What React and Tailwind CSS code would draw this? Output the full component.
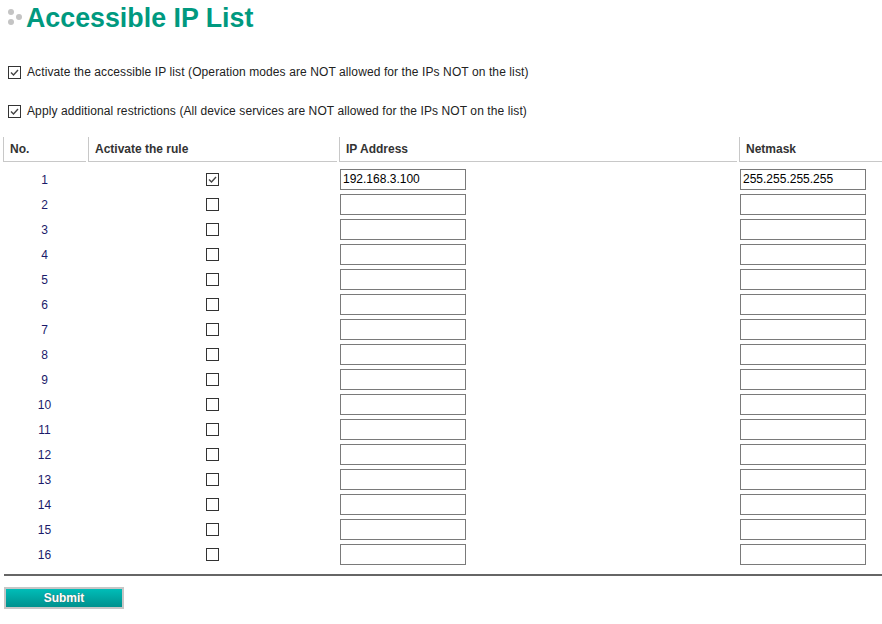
import React from "react";

function Box({ checked }) {
  return (
    <span className="inline-flex w-[13px] h-[13px] border border-[#333] bg-white items-center justify-center shrink-0">
      {checked && (
        <svg width="11" height="11" viewBox="0 0 11 11">
          <path d="M2 5.5 L4.5 8 L9 3" fill="none" stroke="#444" strokeWidth="1.4" />
        </svg>
      )}
    </span>
  );
}

function Input({ value }) {
  return (
    <div className="w-[126px] h-[21px] border border-[#7a7a7a] bg-white text-[12px] text-black leading-[19px] pl-[2px]">
      {value || ""}
    </div>
  );
}

export default function App() {
  const rows = Array.from({ length: 16 }, (_, i) => i + 1);
  return (
    <div className="w-[882px] h-[624px] bg-white font-['Liberation_Sans',Arial,sans-serif] text-[12px] text-[#222] overflow-hidden">
      <div className="flex items-center h-[36px] pl-[8px]">
        <div className="relative w-[17px] h-[20px]">
          <span className="absolute left-[0px] top-[1px] w-[6px] h-[6px] rounded-full bg-[#c4c4c4]"></span>
          <span className="absolute left-[0px] top-[11px] w-[6px] h-[6px] rounded-full bg-[#c4c4c4]"></span>
          <span className="absolute left-[8px] top-[6px] w-[6px] h-[6px] rounded-full bg-[#c4c4c4]"></span>
        </div>
        <h1 className="text-[26.8px] font-bold text-[#00997f] leading-none ml-[1px]">Accessible IP List</h1>
      </div>

      <div className="flex items-center gap-[6px] pl-[8px] mt-[29px] h-[14px] tracking-[0.1px]">
        <Box checked />
        <span>Activate the accessible IP list (Operation modes are NOT allowed for the IPs NOT on the list)</span>
      </div>
      <div className="flex items-center gap-[6px] pl-[8px] mt-[25px] h-[14px] tracking-[0.1px]">
        <Box checked />
        <span>Apply additional restrictions (All device services are NOT allowed for the IPs NOT on the list)</span>
      </div>

      <div className="grid grid-cols-[83px_249px_398px_1fr] gap-x-[2px] ml-[3px] mt-[19px]">
        <div className="h-[25px] border-l border-b border-[#c8c8c8] pl-[6px] flex items-center font-bold text-[#333]">No.</div>
        <div className="h-[25px] border-l border-b border-[#c8c8c8] pl-[6px] flex items-center font-bold text-[#333]">Activate the rule</div>
        <div className="h-[25px] border-l border-b border-[#c8c8c8] pl-[6px] flex items-center font-bold text-[#333]">IP Address</div>
        <div className="h-[25px] border-l border-b border-[#c8c8c8] pl-[6px] flex items-center font-bold text-[#333]">Netmask</div>
      </div>

      <div className="grid grid-cols-[83px_249px_398px_1fr] gap-x-[2px] ml-[3px] mt-[5px]">
        {rows.map((n) => (
          <React.Fragment key={n}>
            <div className="h-[25px] flex items-center justify-center text-[#1a1a6a]">{n}</div>
            <div className="h-[25px] flex items-center justify-center">
              <Box checked={n === 1} />
            </div>
            <div className="h-[25px] flex items-center pl-[1px]">
              <Input value={n === 1 ? "192.168.3.100" : ""} />
            </div>
            <div className="h-[25px] flex items-center pl-[1px]">
              <Input value={n === 1 ? "255.255.255.255" : ""} />
            </div>
          </React.Fragment>
        ))}
      </div>

      <div className="ml-[4px] mt-[7px] h-[2px] bg-[#666]"></div>

      <div className="ml-[4px] mt-[11px]">
        <button className="w-[120px] h-[22px] border-2 border-[#c6c6c6] bg-gradient-to-b from-[#00bdb8] to-[#00918e] text-white font-bold text-[12px] leading-none [text-shadow:0_0_1px_#555]">
          Submit
        </button>
      </div>
    </div>
  );
}
